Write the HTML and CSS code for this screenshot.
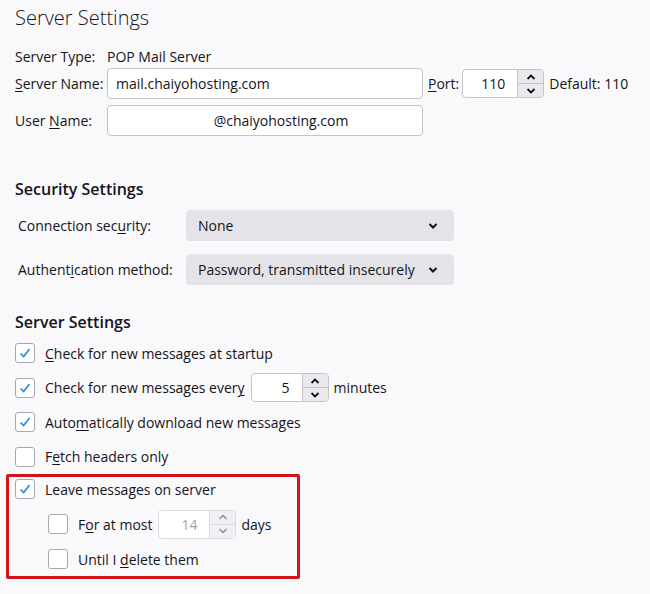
FILE: index.html
```html
<!DOCTYPE html>
<html>
<head>
  <title>Server Settings</title>
  <link rel="stylesheet" href="styles.css">
</head>
<body>
  <h1>Server Settings</h1>

  <!-- Server identity -->
  <div class="server-rows">
    <div class="row type-row">
      <span class="label">Server Type:</span>
      <span>POP Mail Server</span>
    </div>

    <div class="row name-row">
      <span class="label"><u>S</u>erver Name:</span>
      <div class="textbox wide">mail.chaiyohosting.com</div>
      <span class="port-label"><u>P</u>ort:</span>
      <div class="spinner port">
        <span class="spin-value">110</span>
        <div class="spin-buttons">
          <span class="spin-btn"><svg viewBox="0 0 10 6"><path d="M1.5 5L5 1.5L8.5 5"/></svg></span>
          <span class="spin-btn"><svg viewBox="0 0 10 6"><path d="M1.5 1L5 4.5L8.5 1"/></svg></span>
        </div>
      </div>
      <span class="default">Default: 110</span>
    </div>

    <div class="row">
      <span class="label">User <u>N</u>ame:</span>
      <div class="textbox wide centered">@chaiyohosting.com</div>
    </div>
  </div>

  <!-- Security -->
  <h2>Security Settings</h2>
  <div class="security-grid">
    <span>Connection sec<u>u</u>rity:</span>
    <div class="select">None<svg class="chev" viewBox="0 0 10 6"><path d="M1.5 1L5 4.5L8.5 1"/></svg></div>

    <span>Authent<u>i</u>cation method:</span>
    <div class="select">Password, transmitted insecurely<svg class="chev" viewBox="0 0 10 6"><path d="M1.5 1L5 4.5L8.5 1"/></svg></div>
  </div>

  <!-- Server behaviour -->
  <h2 class="second">Server Settings</h2>
  <div class="options">
    <div class="option">
      <span class="checkbox checked"><svg viewBox="0 0 20 20"><path d="M5 10.5L8.5 14L15 5.5"/></svg></span>
      <span><u>C</u>heck for new messages at startup</span>
    </div>
    <div class="option">
      <span class="checkbox checked"><svg viewBox="0 0 20 20"><path d="M5 10.5L8.5 14L15 5.5"/></svg></span>
      <span>Check for new messages ever<u>y</u></span>
      <div class="spinner small">
        <span class="spin-value">5</span>
        <div class="spin-buttons">
          <span class="spin-btn"><svg viewBox="0 0 10 6"><path d="M1.5 5L5 1.5L8.5 5"/></svg></span>
          <span class="spin-btn"><svg viewBox="0 0 10 6"><path d="M1.5 1L5 4.5L8.5 1"/></svg></span>
        </div>
      </div>
      <span>minutes</span>
    </div>
    <div class="option">
      <span class="checkbox checked"><svg viewBox="0 0 20 20"><path d="M5 10.5L8.5 14L15 5.5"/></svg></span>
      <span>Auto<u>m</u>atically download new messages</span>
    </div>
    <div class="option">
      <span class="checkbox"></span>
      <span>F<u>e</u>tch headers only</span>
    </div>

    <div class="highlight">
      <div class="option">
        <span class="checkbox checked"><svg viewBox="0 0 20 20"><path d="M5 10.5L8.5 14L15 5.5"/></svg></span>
        <span>Leave messa<u>g</u>es on server</span>
      </div>
      <div class="option nested">
        <span class="checkbox"></span>
        <span>F<u>o</u>r at most</span>
        <div class="spinner small disabled">
          <span class="spin-value">14</span>
          <div class="spin-buttons">
            <span class="spin-btn"><svg viewBox="0 0 10 6"><path d="M1.5 5L5 1.5L8.5 5"/></svg></span>
            <span class="spin-btn"><svg viewBox="0 0 10 6"><path d="M1.5 1L5 4.5L8.5 1"/></svg></span>
          </div>
        </div>
        <span>days</span>
      </div>
      <div class="option nested">
        <span class="checkbox"></span>
        <span>Until I <u>d</u>elete them</span>
      </div>
    </div>
  </div>
</body>
</html>
```

FILE: styles.css
```css
body {
  font-family: 'Open Sans', 'Noto Sans', sans-serif;
  font-size: 14px;
  margin: 0;
  padding: 0 15px;
  background-color: #f9f9fb;
  color: #15141a;
  width: 620px;
  height: 594px;
  overflow: hidden;
}

u {
  text-decoration-thickness: 1px;
  text-underline-offset: 2px;
}

h1 {
  font-size: 20px;
  font-weight: 300;
  margin: 4px 0 14px;
  line-height: 28px;
}

h2 {
  font-size: 16px;
  font-weight: 600;
  margin: 0 0 10px;
  line-height: 22px;
}

h2.second {
  margin-top: 26px;
  margin-bottom: 3px;
}

.server-rows {
  display: flex;
  flex-direction: column;
  margin-bottom: 42px;
}

.row {
  display: flex;
  align-items: center;
  height: 31px;
  margin-bottom: 6px;
}

.row:last-child {
  margin-bottom: 0;
}

.type-row {
  height: 20px;
  margin-bottom: 2px;
}

.label {
  width: 92px;
  flex-shrink: 0;
}

.name-row {
  gap: 5px;
}

.name-row .label {
  margin-right: -5px;
}

.textbox {
  height: 31px;
  box-sizing: border-box;
  border: 1px solid #c4c4c9;
  border-radius: 4px;
  background: #fff;
  padding: 0 8px;
  display: flex;
  align-items: center;
}

.textbox.wide {
  width: 316px;
}

.textbox.centered {
  justify-content: center;
  padding-left: 40px;
}

.spinner {
  display: flex;
  box-sizing: border-box;
  border: 1px solid #c4c4c9;
  border-radius: 4px;
  background: #fff;
  height: 29px;
  width: 82px;
}

.spinner.port {
  margin-left: -2px;
}

.spinner.small {
  width: 78px;
  margin: 0 5px 0 6px;
}

.spin-value {
  flex: 1;
  display: flex;
  align-items: center;
  justify-content: flex-end;
  padding-right: 12px;
}

.spin-buttons {
  width: 25px;
  display: flex;
  flex-direction: column;
  border-left: 1px solid #c4c4c9;
}

.spin-btn {
  flex: 1;
  background: #e9e9ed;
  display: flex;
  align-items: center;
  justify-content: center;
}

.spin-btn:first-child {
  border-bottom: 1px solid #c4c4c9;
  border-top-right-radius: 3px;
}

.spin-btn:last-child {
  border-bottom-right-radius: 3px;
}

.spin-btn svg {
  width: 10px;
  height: 6px;
  fill: none;
  stroke: #15141a;
  stroke-width: 1.8;
}

.spinner.disabled {
  border-color: #dcdce0;
  color: #a0a0a6;
}

.spinner.disabled .spin-buttons,
.spinner.disabled .spin-btn:first-child {
  border-color: #dcdce0;
}

.spinner.disabled .spin-btn {
  background: #f0f0f4;
}

.spinner.disabled .spin-btn svg {
  stroke: #8c8c94;
  stroke-width: 1.4;
}

.security-grid {
  display: grid;
  grid-template-columns: 168px 268px;
  row-gap: 13px;
  align-items: center;
  padding-left: 3px;
}

.select {
  height: 31px;
  background: #e4e4e8;
  border-radius: 4px;
  display: flex;
  align-items: center;
  justify-content: space-between;
  padding: 0 16px 0 12px;
}

.chev {
  width: 10px;
  height: 6px;
  fill: none;
  stroke: #15141a;
  stroke-width: 2;
}

.options {
  display: flex;
  flex-direction: column;
}

.option {
  display: flex;
  align-items: center;
  height: 34.5px;
  flex-shrink: 0;
}

.checkbox {
  width: 20px;
  height: 20px;
  box-sizing: border-box;
  border: 1px solid #a8a8b0;
  border-radius: 3px;
  background: #fff;
  margin-right: 10px;
  flex-shrink: 0;
}

.checkbox svg {
  width: 18px;
  height: 18px;
  fill: none;
  stroke: #2a8ad4;
  stroke-width: 1.8;
}

.highlight {
  box-sizing: border-box;
  margin: 0 0 0 -9px;
  width: 294px;
  height: 105px;
  padding: 0 0 0 6px;
  border: 3px solid #d3121b;
  border-radius: 2px;
  display: flex;
  flex-direction: column;
}

.highlight .option:first-child {
  margin-top: -5px;
}

.option.nested {
  padding-left: 33px;
  height: 35px;
}
```
